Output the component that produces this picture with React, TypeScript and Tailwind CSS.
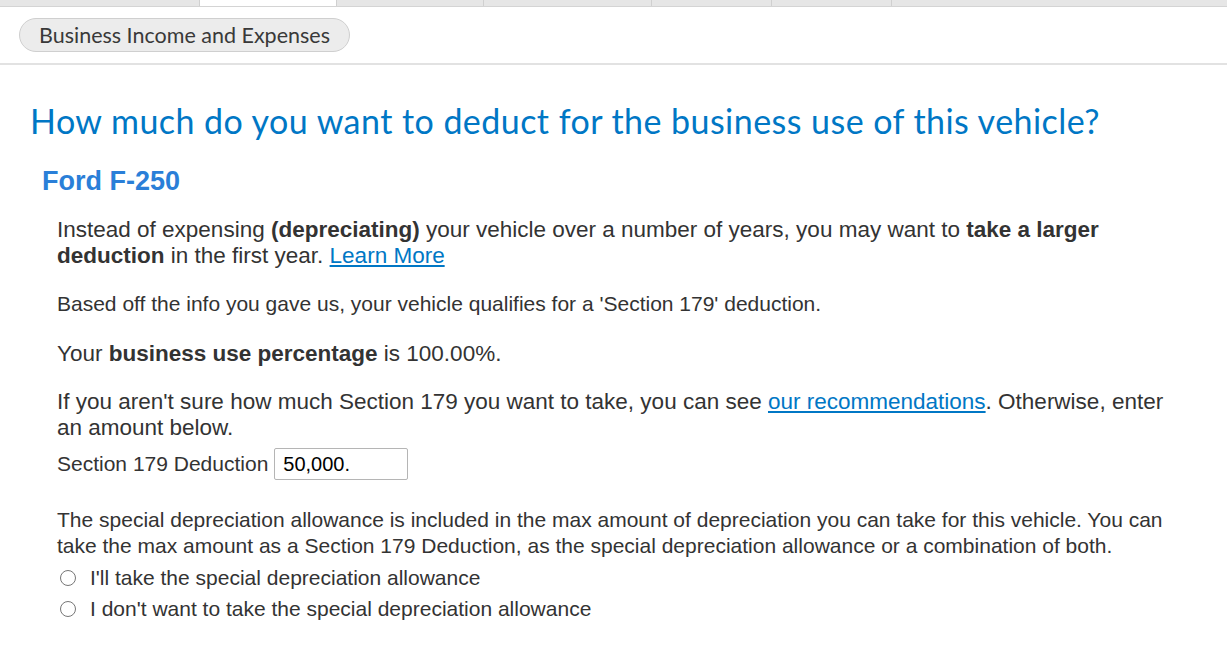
import React from 'react';

const tabs = [
  { w: 'w-[200px]', active: false },
  { w: 'w-[137px]', active: true },
  { w: 'w-[147px]', active: false },
  { w: 'w-[168px]', active: false },
  { w: 'w-[120px]', active: false },
  { w: 'w-[120px]', active: false },
];

const Radio = ({ label }: { label: string }) => (
  <label className="flex items-center gap-[14px] h-[31px]">
    <span className="w-[16px] h-[16px] rounded-full border border-[#767676] bg-white ml-[3px]" />
    <span>{label}</span>
  </label>
);

export default function App() {
  return (
    <div className="min-h-[645px] bg-white text-[#333] font-['Liberation_Sans',Arial,sans-serif]">
      {/* tab strip */}
      <div className="flex h-[7px] bg-[#e6e6e6] border-b border-[#d4d4d4]">
        {tabs.map((t, i) => (
          <div
            key={i}
            className={`${t.w} h-full border-r border-[#d0d0d0] ${t.active ? 'bg-white' : 'bg-[#e6e6e6]'}`}
          />
        ))}
        <div className="flex-1" />
      </div>

      {/* breadcrumb */}
      <div className="h-[58px] border-b-2 border-[#e2e2e2] pl-[19px] pt-[11px]">
        <span className="inline-flex items-center h-[34px] px-[19px] rounded-full border border-[#cfcfcf] bg-[#ececec] text-[21.5px] text-[#393939] font-['Lato',sans-serif]">
          Business Income and Expenses
        </span>
      </div>

      <div className="pl-[30px] pr-[47px]">
        <h1 className="mt-[36px] text-[34px] leading-[40px] tracking-[0.45px] text-[#0077c5] font-['Lato',sans-serif]">
          How much do you want to deduct for the business use of this vehicle?
        </h1>
        <h2 className="mt-[24px] ml-[12px] text-[27px] leading-[32px] font-bold text-[#2a7fd8]">Ford F-250</h2>

        <div className="ml-[27px] mt-[20px]">
          <p className="text-[22.5px] leading-[26px]">
            Instead of expensing <b>(depreciating)</b> your vehicle over a number of years, you may want to{' '}
            <b>take a larger deduction</b> in the first year.{' '}
            <a className="text-[#0077c5] underline">Learn More</a>
          </p>
          <p className="mt-[22px] text-[21px] leading-[26px]">
            Based off the info you gave us, your vehicle qualifies for a 'Section 179' deduction.
          </p>
          <p className="mt-[24px] text-[22.5px] leading-[26px]">
            Your <b>business use percentage</b> is 100.00%.
          </p>
          <p className="mt-[22px] text-[22.5px] leading-[26px]">
            If you aren't sure how much Section 179 you want to take, you can see{' '}
            <a className="text-[#0077c5] underline">our recommendations</a>. Otherwise, enter an amount below.
          </p>
          <div className="mt-[7px] flex items-center gap-[6px] text-[21px]">
            <span>Section 179 Deduction</span>
            <input
              readOnly
              value="50,000."
              className="w-[134px] h-[32px] border border-[#b5b5b5] rounded-[2px] px-[8px] text-[20px] text-black outline-none"
            />
          </div>
          <p className="mt-[27px] text-[21px] leading-[26px]">
            The special depreciation allowance is included in the max amount of depreciation you can take for this vehicle. You can take the max amount as a Section 179 Deduction, as the special depreciation allowance or a combination of both.
          </p>
          <div className="text-[21px] mt-[3px]">
            <Radio label="I'll take the special depreciation allowance" />
            <Radio label="I don't want to take the special depreciation allowance" />
          </div>
        </div>
      </div>
    </div>
  );
}
